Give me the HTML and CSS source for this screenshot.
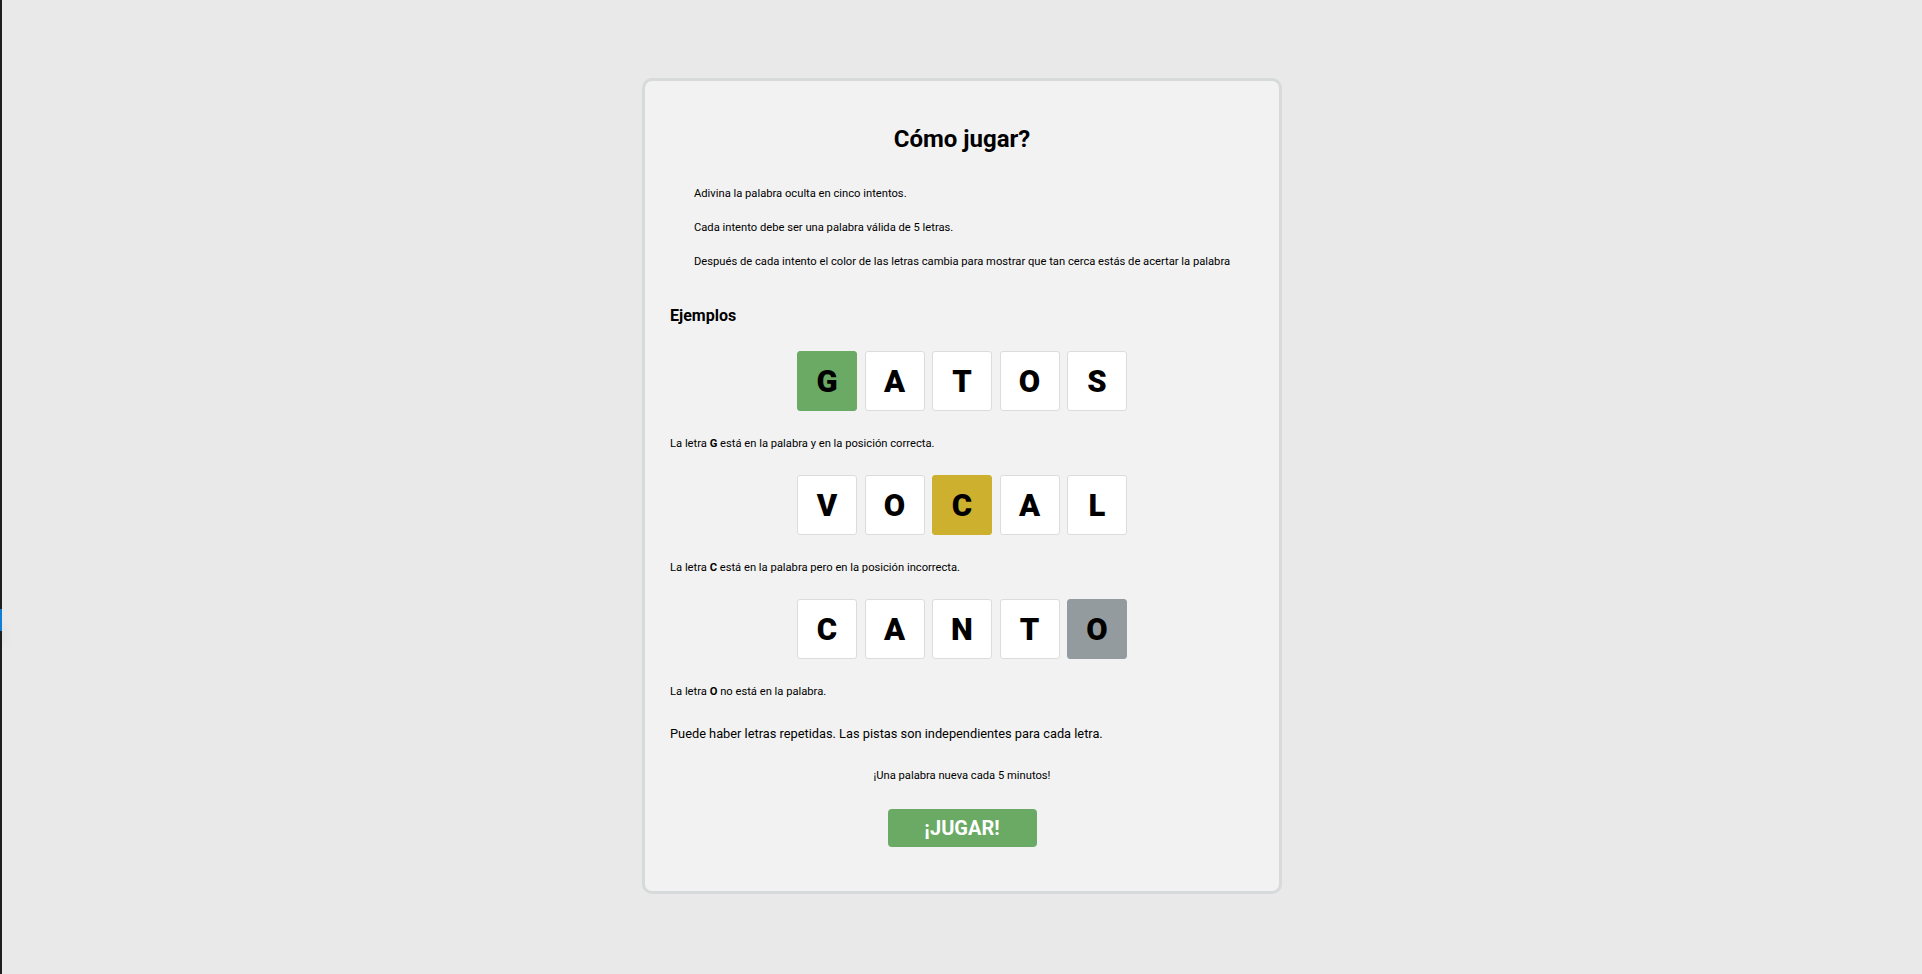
FILE: index.html
```html
<!DOCTYPE html>
<html lang="es">
<head>
<meta charset="utf-8">
<title>Cómo jugar?</title>
<link rel="stylesheet" href="styles.css">
</head>
<body>
<div class="edge"><span class="edge-mark"></span></div>
<main class="page">
  <section class="card">
    <h1 class="title">Cómo jugar?</h1>
    <ul class="rules">
      <li>Adivina la palabra oculta en cinco intentos.</li>
      <li>Cada intento debe ser una palabra válida de 5 letras.</li>
      <li>Después de cada intento el color de las letras cambia para mostrar que tan cerca estás de acertar la palabra</li>
    </ul>
    <h2 class="examples">Ejemplos</h2>

    <div class="example first">
      <div class="row">
        <div class="tile correct">G</div>
        <div class="tile">A</div>
        <div class="tile">T</div>
        <div class="tile">O</div>
        <div class="tile">S</div>
      </div>
      <p class="note">La letra <b>G</b> está en la palabra y en la posición correcta.</p>
    </div>

    <div class="example">
      <div class="row">
        <div class="tile">V</div>
        <div class="tile">O</div>
        <div class="tile present">C</div>
        <div class="tile">A</div>
        <div class="tile">L</div>
      </div>
      <p class="note">La letra <b>C</b> está en la palabra pero en la posición incorrecta.</p>
    </div>

    <div class="example">
      <div class="row">
        <div class="tile">C</div>
        <div class="tile">A</div>
        <div class="tile">N</div>
        <div class="tile">T</div>
        <div class="tile absent">O</div>
      </div>
      <p class="note">La letra <b>O</b> no está en la palabra.</p>
    </div>

    <p class="repeat">Puede haber letras repetidas. Las pistas son independientes para cada letra.</p>
    <p class="timer">¡Una palabra nueva cada 5 minutos!</p>
    <div class="actions">
      <button class="play" type="button">¡JUGAR!</button>
    </div>
  </section>
</main>
</body>
</html>
```
FILE: styles.css
```css
* { box-sizing: border-box; }

html, body {
  margin: 0;
  padding: 0;
  height: 100%;
}

body {
  background: #e9e9e9;
  font-family: Roboto, "Liberation Sans", Arial, sans-serif;
  color: #000;
  display: flex;
  min-height: 974px;
}

.edge {
  width: 2px;
  flex: 0 0 2px;
  background: #1e1e1e;
  position: relative;
}

.edge-mark {
  position: absolute;
  left: 0;
  top: 609px;
  width: 2px;
  height: 22px;
  background: #0f7ed6;
  box-shadow: 2px 14px 10px rgba(0, 0, 0, 0.12);
}

.page {
  flex: 1;
  display: flex;
  justify-content: center;
  align-items: flex-start;
  padding-top: 78px;
}

.card {
  width: 640px;
  background: #f2f2f2;
  border: 3px solid #d6dada;
  border-radius: 10px;
  padding: 44px 25px 44px;
}

.title {
  margin: 0;
  text-align: center;
  font-size: 24px;
  line-height: 28px;
  font-weight: 700;
}

.rules {
  list-style: none;
  margin: 34px 0 0;
  padding: 0 0 0 24px;
}

.rules li {
  font-size: 11.2px;
  line-height: 14px;
}

.rules li + li {
  margin-top: 20px;
}

.examples {
  margin: 37px 0 0;
  font-size: 16px;
  line-height: 20px;
  font-weight: 700;
}

.example {
  margin-top: 24.5px;
}

.example.first {
  margin-top: 25px;
}

.row {
  display: flex;
  justify-content: center;
  gap: 7.5px;
}

.tile {
  width: 60px;
  height: 60px;
  background: #fff;
  border: 1px solid #dcdcdc;
  border-radius: 3px;
  display: flex;
  align-items: center;
  justify-content: center;
  font-size: 31px;
  font-weight: 900;
}

.tile.correct {
  background: #6aaa64;
  border-color: #6aaa64;
}

.tile.present {
  background: #cdb02e;
  border-color: #cdb02e;
}

.tile.absent {
  background: #949b9f;
  border-color: #949b9f;
}

.note {
  margin: 25.5px 0 0;
  font-size: 11.2px;
  line-height: 14px;
}

.repeat {
  margin: 27px 0 0;
  font-size: 12.8px;
  line-height: 16px;
}

.timer {
  margin: 27.5px 0 0;
  text-align: center;
  font-size: 11.2px;
  line-height: 14px;
}

.actions {
  margin-top: 26px;
  display: flex;
  justify-content: center;
}

.play {
  width: 149px;
  height: 38px;
  border: none;
  border-radius: 4px;
  background: #6aaa64;
  color: #fff;
  font-family: inherit;
  font-size: 20px;
  font-weight: 700;
  cursor: pointer;
}
```
